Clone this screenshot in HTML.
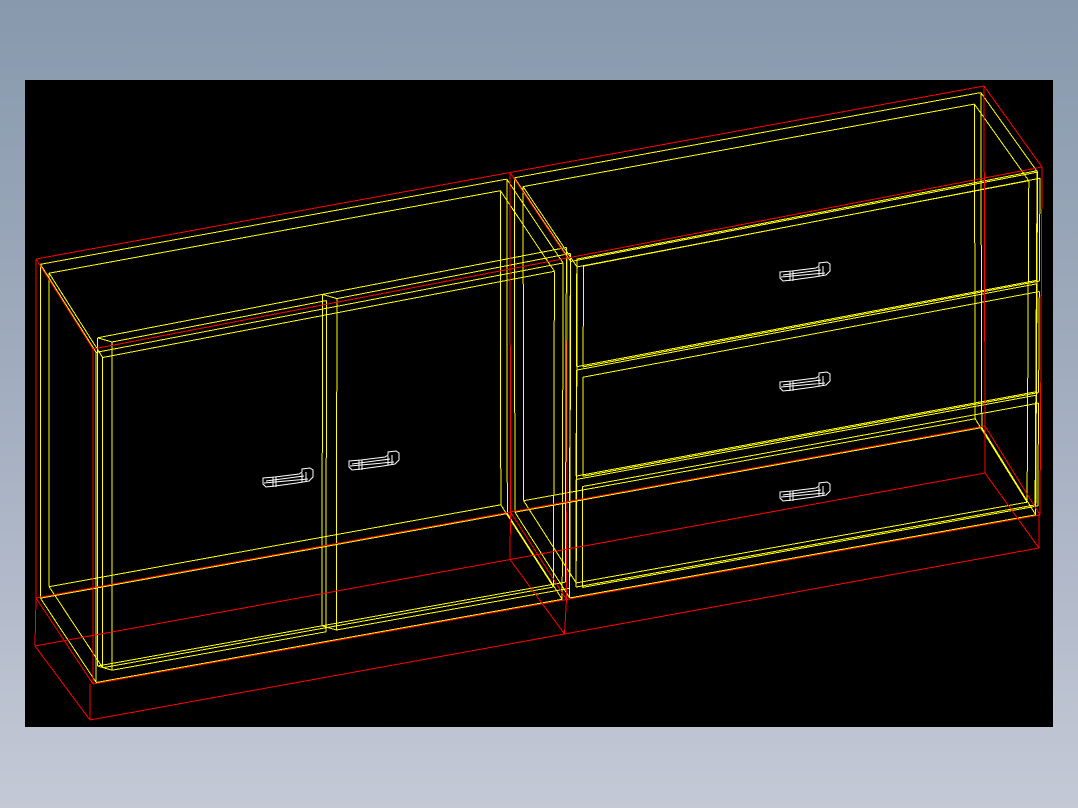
<!DOCTYPE html>
<html><head><meta charset="utf-8"><style>
html,body{margin:0;padding:0;}
body{width:1078px;height:808px;background:linear-gradient(#8899ad,#a3aec0 50%,#c4c9d6);position:relative;overflow:hidden;}
#c{position:absolute;left:25px;top:80px;width:1028px;height:647px;background:#000;}
svg{position:absolute;left:0;top:0;}
</style></head><body>
<div id="c"></div>
<svg id="s" width="1078" height="808" shape-rendering="crispEdges"></svg>
<script>
var s=document.getElementById('s'),NS='http://www.w3.org/2000/svg';
var FBL=[93,684],FBR=[1040,515],FTL=[93,349],FTR=[1042,167],BBL=[36,598],BBR=[985,426],BTL=[36,259],BTR=[984,86];
function lp(a,b,t){return [a[0]+(b[0]-a[0])*t,a[1]+(b[1]-a[1])*t];}
function M(u,v,h){var f=lp(lp(FBL,FBR,u),lp(FTL,FTR,u),h);var b=lp(lp(BBL,BBR,u),lp(BTL,BTR,u),h);return lp(f,b,v);}
function L(a,b,c){var l=document.createElementNS(NS,'line');l.setAttribute('x1',a[0].toFixed(1));l.setAttribute('y1',a[1].toFixed(1));l.setAttribute('x2',b[0].toFixed(1));l.setAttribute('y2',b[1].toFixed(1));l.setAttribute('stroke',c);l.setAttribute('stroke-width','1');s.appendChild(l);}
function box(u0,u1,v0,v1,h0,h1,c){
 var us=[u0,u1],vs=[v0,v1],hs=[h0,h1];
 for(var i=0;i<2;i++)for(var j=0;j<2;j++){
  L(M(u0,vs[i],hs[j]),M(u1,vs[i],hs[j]),c);
  L(M(us[i],v0,hs[j]),M(us[i],v1,hs[j]),c);
  L(M(us[i],vs[j],h0),M(us[i],vs[j],h1),c);
 }}
function rect(u0,u1,v,h0,h1,c){L(M(u0,v,h0),M(u1,v,h0),c);L(M(u0,v,h1),M(u1,v,h1),c);L(M(u0,v,h0),M(u0,v,h1),c);L(M(u1,v,h0),M(u1,v,h1),c);}
var R='#ff0000',Y='#ffff00';
[[0,0.5],[0.5,1]].forEach(function(c){
 box(c[0]+0.012,c[1]-0.012,0.03,0.97,0.035,0.96,Y);
 box(c[0]+0.004,c[1]-0.004,0.01,0.99,0.0,0.985,Y);
});
// doors
[[0.003,0.24],[0.24,0.497]].forEach(function(d){
 rect(d[0],d[1],-0.03,0.06,1.04,Y);
 rect(d[0]+0.011,d[1],-0.1,0.06,1.04,Y);
 L(M(d[0],-0.03,1.04),M(d[0]+0.011,-0.1,1.04),Y);
 L(M(d[0],-0.03,0.06),M(d[0]+0.011,-0.1,0.06),Y);
});
// drawers
[[0.04,0.355],[0.365,0.675],[0.685,1.0]].forEach(function(d){
 rect(0.508,0.993,-0.03,d[0],d[1],Y);
 rect(0.512,0.993,-0.08,d[0]+0.01,d[1]-0.01,Y);
});
// red body
box(0,0.5,0,1,0,1,R);
box(0.5,1,0,1,0,1,R);
// plinth
var PFL=[90,720],PFR=[1039,548],PBL=[35,646],PBR=[985,473];
L(PFL,PFR,R);L(PFL,[90,684],R);L(PFR,[1039,515],R);
L(PBL,PFL,R);L(PBR,PFR,R);L(PBL,PBR,R);L(PBL,BBL,R);L(PBR,BBR,R);
var mid=lp(PFL,PFR,0.5),mb=lp(PBL,PBR,0.5);L(mb,mid,R);L(mid,M(0.5,0,0),R);L(mb,M(0.5,1,0),R);
// handles
function H(x,y){
 var g=document.createElementNS(NS,'path');
 g.setAttribute('d','M'+x+' '+(y+6)+' l12 -1 l24 -3 l3 -2 l0 -3 l8 -1 l3 2 l0 7 l-4 4 l-12 2 l-22 3 l-9 1 l-3 -3 z M'+(x+3)+' '+(y+9)+' l38 -5 M'+(x+10)+' '+(y+5)+' l0 10 M'+(x+13)+' '+(y+5)+' l0 10 M'+(x+39)+' '+(y+1)+' l0 9 M'+(x+43)+' '+y+' l0 9 M'+(x+1)+' '+(y+11)+' l44 -4');
 g.setAttribute('fill','none');g.setAttribute('stroke','#fff');g.setAttribute('stroke-width','1');g.setAttribute('shape-rendering','auto');s.appendChild(g);}
H(263,472);H(349,455);H(780,266);H(780,376);H(780,486);
</script>
</body></html>
